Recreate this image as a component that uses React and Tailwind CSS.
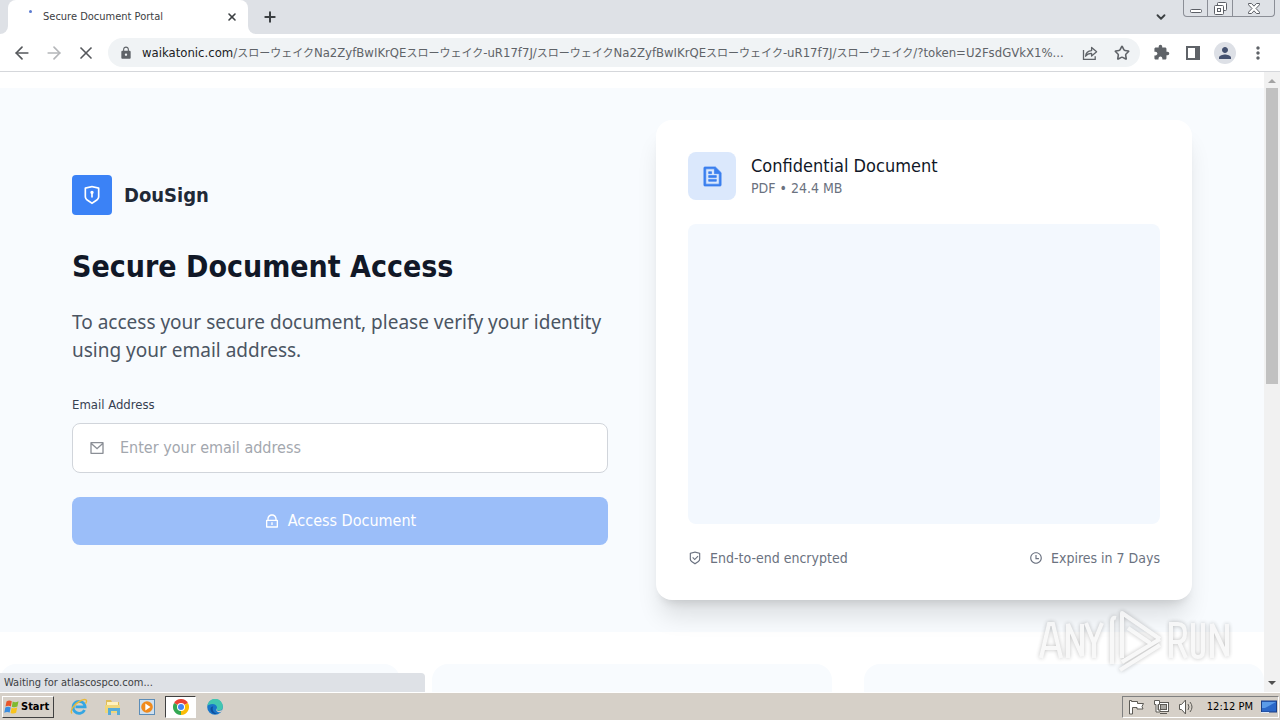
import { ArrowLeft, ArrowRight, ChevronDown, Plus, Star, X } from "lucide-react";
import {
  RiFileTextLine,
  RiLockLine,
  RiMailLine,
  RiShieldCheckLine,
  RiShieldKeyholeLine,
  RiTimeLine,
} from "react-icons/ri";
import { MdExtension, MdLock, MdMoreVert, MdPerson } from "react-icons/md";

function Kana() {
  return <span className="text-[11px]">スローウェイク</span>;
}

function ShareIcon() {
  return (
    <svg width="16" height="16" viewBox="0 0 16 16" fill="none" stroke="#5f6368" strokeWidth="1.3">
      <path d="M1.5 5v9.3h11.7v-3" />
      <path d="M3.6 11.2c.3-3.6 2.6-5.4 6-5.6V2.4l5 4.4-5 4.2V8.3c-2.700-.1-4.600.8-6 2.900z" strokeLinejoin="round" />
    </svg>
  );
}

function SidePanelIcon() {
  return (
    <svg width="14" height="14" viewBox="0 0 14 14">
      <path d="M0 0h14v14H0zM2 2v10h7V2z" fill="#5f6368" fillRule="evenodd" />
    </svg>
  );
}

function WindowButtons() {
  return (
    <div className="flex h-[17px] self-start rounded-b-[4px] border border-t-0 border-[#8b8e96] text-[#5c5f66]">
      <button aria-label="Minimize" className="flex w-6 items-end justify-center border-r border-[#8b8e96] pb-[3px]">
        <svg width="12" height="4" viewBox="0 0 12 4" fill="#fff" stroke="currentColor">
          <rect x=".5" y=".5" width="11" height="3" rx="1" />
        </svg>
      </button>
      <button aria-label="Restore" className="flex w-[25px] items-center justify-center border-r border-[#8b8e96]">
        <svg width="13" height="13" viewBox="0 0 13 13" fill="#fff" stroke="currentColor">
          <rect x="3.500" y=".5" width="9" height="8" rx="1" />
          <rect x=".5" y="3.500" width="9" height="9" rx="1" />
          <rect x="3.500" y="6.500" width="3" height="3" />
        </svg>
      </button>
      <button aria-label="Close window" className="flex w-[41px] items-center justify-center">
        <svg width="12" height="11" viewBox="0 0 12 11" fill="#fff" stroke="currentColor" strokeLinejoin="round">
          <path d="M.5.5h3L6 3.200 8.500.5h3v1.300L8 5.500l3.500 3.700v1.300h-3L6 7.800l-2.500 2.700h-3V9.200L4 5.500.5 1.800z" />
        </svg>
      </button>
    </div>
  );
}

function TabStrip() {
  return (
    <header className="flex h-[34px] shrink-0 items-center bg-[#dee1e6]">
      <div className="h-full w-2 bg-white">
        <div className="h-full w-2 rounded-br-lg bg-[#dee1e6]" />
      </div>
      <div className="flex h-full w-60 items-center rounded-t-lg bg-white pr-[10px]">
        <span className="mb-3 ml-[21px] size-[3px] rounded-full bg-[#5b7bd0]" />
        <span className="ml-[11px] flex-1 text-[11px] text-[#3c4043]">Secure Document Portal</span>
        <button aria-label="Close tab" className="text-[#3c4043]">
          <X size={12} strokeWidth={3.2} />
        </button>
      </div>
      <div className="h-full w-2 bg-white">
        <div className="h-full w-2 rounded-bl-lg bg-[#dee1e6]" />
      </div>
      <button aria-label="New tab" className="ml-[6px] text-[#3c4043]">
        <Plus size={16} strokeWidth={3} />
      </button>
      <div className="flex-1" />
      <button aria-label="Search tabs" className="mr-[15px] text-[#3c4043]">
        <ChevronDown size={14} strokeWidth={3.2} />
      </button>
      <WindowButtons />
      <div className="w-[5px]" />
    </header>
  );
}

function Toolbar() {
  return (
    <nav className="flex h-[38px] shrink-0 items-center border-b border-[#d5d7db] bg-white px-3 text-[#5f6368]">
      <button aria-label="Back" className="text-[#55585c]">
        <ArrowLeft size={20} strokeWidth={2} />
      </button>
      <button aria-label="Forward" className="ml-3 text-[#b4b6b9]">
        <ArrowRight size={20} strokeWidth={2} />
      </button>
      <button aria-label="Stop loading" className="ml-3 text-[#55585c]">
        <X size={20} strokeWidth={2} />
      </button>
      <div className="ml-3 flex h-[29px] min-w-0 flex-1 items-center rounded-full bg-[#f0f3f5] pr-[10px] pl-[11px]">
        <MdLock size={14} className="shrink-0" />
        <span className="ml-[9px] min-w-0 flex-1 text-[13px] whitespace-nowrap text-[#5f6368]">
          <span className="text-[#202124]">waikatonic.com</span>/<Kana />
          Na2ZyfBwIKrQE
          <Kana />
          -uR17f7J/
          <Kana />
          Na2ZyfBwIKrQE
          <Kana />
          -uR17f7J/
          <Kana />
          /?token=U2FsdGVkX1%...
        </span>
        <button aria-label="Share this page" className="ml-2">
          <ShareIcon />
        </button>
        <button aria-label="Bookmark this tab" className="ml-4">
          <Star size={16} strokeWidth={2.4} />
        </button>
      </div>
      <button aria-label="Extensions" className="ml-[13px]">
        <MdExtension size={17} />
      </button>
      <button aria-label="Side panel" className="ml-4">
        <SidePanelIcon />
      </button>
      <button aria-label="Profile" className="ml-[14px] flex size-[22px] items-center justify-center rounded-full bg-[#dde0e6] text-[#44516f]">
        <MdPerson size={18} />
      </button>
      <button aria-label="Menu" className="ml-3">
        <MdMoreVert size={20} />
      </button>
    </nav>
  );
}

function AccessForm() {
  return (
    <div>
      <div className="mb-8 flex items-center gap-3">
        <div className="flex size-10 items-center justify-center rounded bg-[#3b82f6] text-white">
          <RiShieldKeyholeLine size={20} />
        </div>
        <span className="text-xl font-bold text-[#1f2937]">DouSign</span>
      </div>
      <h1 className="mb-[21px] text-[30px] leading-10 font-bold text-[#111827]">Secure Document Access</h1>
      <p className="mb-8 font-['Noto_Sans',sans-serif] text-[19px] leading-7 text-[#4b5563]">
        To access your secure document, please verify your identity using your email address.
      </p>
      <form onSubmit={(e) => e.preventDefault()}>
        <label htmlFor="email" className="mb-[9px] block text-[13px] leading-[18px] text-[#374151]">
          Email Address
        </label>
        <div className="mb-6 flex h-[50px] items-center gap-[15px] rounded-lg border border-[#d1d5db] bg-white px-4">
          <RiMailLine size={16} className="shrink-0 text-[#8b8f96]" />
          <input
            id="email"
            type="email"
            placeholder="Enter your email address"
            className="min-w-0 flex-1 bg-transparent text-base outline-none placeholder:text-[#a3a7ae]"
          />
        </div>
        <button className="flex h-12 w-full items-center justify-center gap-2 rounded-lg bg-[#9bbef9] text-base text-white">
          <RiLockLine size={16} />
          Access Document
        </button>
      </form>
    </div>
  );
}

function DocumentCard() {
  return (
    <div className="rounded-2xl bg-white p-8 shadow-[0_20px_25px_-5px_rgba(0,0,0,0.12),0_8px_10px_-6px_rgba(0,0,0,0.12)]">
      <div className="mb-6 flex items-center gap-[15px]">
        <div className="flex size-12 items-center justify-center rounded-lg bg-[#dbe8fc] text-[#3b7fee]">
          <RiFileTextLine size={23} stroke="currentColor" strokeWidth={0.7} />
        </div>
        <div>
          <h2 className="text-[18px] leading-6 text-[#111827]">Confidential Document</h2>
          <p className="text-sm leading-5 text-[#6b7280]">PDF • 24.4 MB</p>
        </div>
      </div>
      <div className="mb-6 h-[300px] rounded-lg bg-[#f3f8fe]" />
      <div className="flex justify-between text-sm leading-5 text-[#6b7280]">
        <span className="flex items-center gap-2">
          <RiShieldCheckLine size={14} />
          End-to-end encrypted
        </span>
        <span className="flex items-center gap-2">
          <RiTimeLine size={14} />
          Expires in 7 Days
        </span>
      </div>
    </div>
  );
}

function Scrollbar() {
  return (
    <div className="flex w-4 shrink-0 flex-col items-center justify-between bg-[#f1f1f1]">
      <svg width="16" height="16" viewBox="0 0 16 16">
        <path d="M4 11l4-4 4 4z" fill="#a3a3a3" />
      </svg>
      <div className="w-3 basis-[296px] bg-[#c1c1c1]" />
      <div className="flex-1" />
      <svg width="16" height="17" viewBox="0 0 16 17">
        <path d="M4 6l4 4 4-4z" fill="#505050" />
      </svg>
    </div>
  );
}

function Watermark() {
  return (
    <div className="absolute right-[46px] bottom-[18px] flex items-center text-[#f7f7f7] opacity-80 drop-shadow-[0_0_2px_rgba(0,0,0,0.3)]">
      <svg width="198" height="66" viewBox="0 0 198 66" fill="none" stroke="currentColor" strokeWidth="4">
        <path d="M5 50l8-34h4l8 34M8 40h14M32 50V16l14 32V16M50 15l8 20 8-20M58 33v17" />
        <path d="M80 10q-4-1-4 4v42M86 50V5l38 26M86 54l38-23M92 20l22 15M84 62l40-25" strokeLinejoin="round" />
        <path d="M135 50V16h7q7 0 7 9t-7 9h-7M143 34l7 16M157 15v28q0 6 5 6t5-6V15M176 50V16l15 32V16" />
      </svg>
    </div>
  );
}

function StartLogo() {
  return (
    <svg width="16" height="16" viewBox="0 0 16 16">
      <path d="M2.500 2.500Q5 .5 7.800 2.200L6.900 7.500Q4.500 6 1.500 7.600z" fill="#e8562a" />
      <path d="M8.700 2.600Q11.500 4 14.500 2.200L13.400 7.600Q10.600 9 7.800 7.800z" fill="#7fba30" />
      <path d="M1.300 8.500Q4 7 6.700 8.400L5.700 13.600Q3.200 12.200.3 13.700z" fill="#3a8de0" />
      <path d="M7.600 8.800Q10.300 10 13.200 8.500L12.100 13.800Q9.400 15.200 6.600 14z" fill="#f8c31c" />
    </svg>
  );
}

function ExplorerE() {
  return (
    <svg width="18" height="18" viewBox="0 0 18 18" fill="none">
      <path d="M14.500 12a6 6 0 1 1 .6-3.200H5.500" stroke="#35a6e2" strokeWidth="2.800" />
      <path d="M2 15.500C-.5 13 4 6 10 3s8-1 5.500 2.500" stroke="#e9b93a" strokeWidth="1.400" />
    </svg>
  );
}

function FolderIcon() {
  return (
    <svg width="18" height="18" viewBox="0 0 18 18">
      <path d="M2 2h5l1 2h7v11H2z" fill="#e0bd58" />
      <path d="M3 4h11v4H3z" fill="#fff2bd" />
      <path d="M1 7h15v8H1z" fill="#efd77c" />
      <path d="M4 10h12v7h-3v-4H7v4H4z" fill="#56acd9" />
    </svg>
  );
}

function PlayerIcon() {
  return (
    <svg width="17" height="17" viewBox="0 0 17 17">
      <rect x=".5" y=".5" width="15" height="15" fill="#cfe0ef" stroke="#5c8db8" />
      <circle cx="8" cy="8" r="5.800" fill="#f08a1c" />
      <path d="M6.300 4.500v7L11.500 8z" fill="#fff" />
    </svg>
  );
}

function ChromeIcon() {
  return (
    <svg width="16" height="16" viewBox="0 0 16 16">
      <path d="M8 8L1.070 4A8 8 0 0 1 14.930 4z" fill="#ea4335" />
      <path d="M8 8L14.930 4A8 8 0 0 1 8 16z" fill="#fbbc05" />
      <path d="M8 8L8 16A8 8 0 0 1 1.070 4z" fill="#34a853" />
      <circle cx="8" cy="8" r="4" fill="#fff" />
      <circle cx="8" cy="8" r="3" fill="#4285f4" />
    </svg>
  );
}

function EdgeIcon() {
  return (
    <svg width="16" height="16" viewBox="0 0 16 16">
      <circle cx="8" cy="8" r="7.800" fill="#1976c9" />
      <path d="M.4 7A7.700 7.700 0 0 1 15.800 8c0 2.600-2 3.600-3.900 3.600-1.800 0-2.700-.8-2.200-1.600C11 7.500 8.500 5 5.500 5 3 5 1 6 .4 7z" fill="#42c6b0" />
      <path d="M6.200 7.500c-1.500 3 .3 6.500 4.300 7.300-4 1-7-1.500-7-4.500 0-2 1.200-3 2.700-2.800z" fill="#0f4f9e" />
      <path d="M9.900 9.200c-.8 1.700.3 2.700 2 2.700 1.500 0 2.700-.4 3.500-1.400-.3 1.200-.8 2-1.300 2.600-3.800.6-6-1.700-4.200-3.900z" fill="#d6d0c8" />
    </svg>
  );
}

function TrayIcons() {
  return (
    <>
      <svg width="17" height="16" viewBox="0 0 17 16" fill="#fff" stroke="#5c5a55">
        <path d="M3.500 2.500h6v2h6l-1.500 3 1 2.500H9V8.500H4.500V15h-3V1.500h2z" strokeLinejoin="round" />
      </svg>
      <svg width="17" height="16" viewBox="0 0 17 16" fill="#fff" stroke="#5c5a55">
        <rect x="5.500" y="3.500" width="10" height="9" />
        <rect x="7.500" y="5.500" width="6" height="5" fill="#a9a7a2" />
        <path d="M7 14.500h7" />
        <path d="M1.500 1.500h5v4H5V11h2v2H3V5.500H1.500z" />
      </svg>
      <svg width="17" height="16" viewBox="0 0 17 16" fill="#fff" stroke="#5c5a55">
        <path d="M1.500 5.500h2L7.500 1v14l-4-4.500h-2z" strokeLinejoin="round" />
        <path d="M10 5q2 3 0 6M12 3q4 5 0 10" fill="none" />
      </svg>
    </>
  );
}

function Taskbar() {
  return (
    <footer className="flex h-7 shrink-0 items-center border-t border-white bg-[#d6d0c8] pt-px pl-[2px] text-black">
      <button className="flex h-[22px] w-[52px] items-center gap-px border border-t-white border-r-[#404040] border-b-[#404040] border-l-white pl-px text-[11px] font-bold">
        <StartLogo />
        Start
      </button>
      <button aria-label="Internet Explorer" className="ml-4"><ExplorerE /></button>
      <button aria-label="File Explorer" className="ml-4"><FolderIcon /></button>
      <button aria-label="Media Player" className="ml-[17px]"><PlayerIcon /></button>
      <button
        aria-label="Google Chrome"
        className="ml-[9px] flex h-[22px] w-[31px] items-center justify-center border border-t-[#404040] border-r-white border-b-white border-l-[#404040] bg-white"
      >
        <ChromeIcon />
      </button>
      <button aria-label="Microsoft Edge" className="ml-[11px]"><EdgeIcon /></button>
      <div className="flex-1" />
      <div className="mr-px flex h-[22px] items-center gap-2 border border-t-[#808080] border-r-white border-b-white border-l-[#808080] pr-px pl-[5px]">
        <TrayIcons />
        <time className="ml-1 text-[11px]">12:12 PM</time>
        <svg width="16" height="14" viewBox="0 0 16 14">
          <rect x=".5" y="1" width="15" height="11" fill="#2c68c8" stroke="#1c3f86" />
          <path d="M1 2h14L4 8H1z" fill="#5b9be8" />
          <path d="M0 12.500h8" stroke="#dfe8f5" />
        </svg>
      </div>
    </footer>
  );
}

export default function App() {
  return (
    <div className="flex h-screen flex-col overflow-hidden bg-white font-['DejaVu_Sans_Condensed','DejaVu_Sans','Noto_Sans_CJK_JP',sans-serif]">
      <TabStrip />
      <Toolbar />
      <div className="relative flex min-h-0 flex-1">
        <main className="min-w-0 flex-1 overflow-hidden pt-4">
          <section className="bg-[#f8fbfe] py-8">
            <div className="mx-auto grid max-w-[1120px] grid-cols-2 items-center gap-12">
              <AccessForm />
              <DocumentCard />
            </div>
          </section>
          <section className="grid grid-cols-3 gap-8 pt-8">
            <div className="h-40 rounded-2xl bg-[#f8fbfe]" />
            <div className="h-40 rounded-2xl bg-[#f8fbfe]" />
            <div className="h-40 rounded-2xl bg-[#f8fbfe]" />
          </section>
        </main>
        <Scrollbar />
        <div className="absolute bottom-0 left-0 h-[19px] w-[425px] rounded-tr bg-[#dee1e6] pl-1 text-[11px] leading-[19px] text-[#3c4043]">
          Waiting for atlascospco.com...
        </div>
        <Watermark />
      </div>
      <Taskbar />
    </div>
  );
}
